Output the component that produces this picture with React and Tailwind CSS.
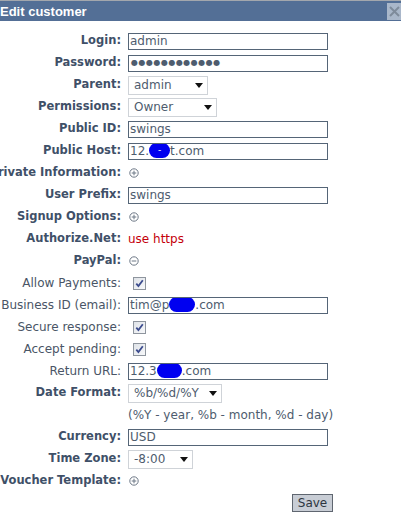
import React from "react";

const font = { fontFamily: '"DejaVu Sans", Verdana, sans-serif' };

const Blob = ({ w = 24, dash = false }) => (
  <span
    className={`inline-flex items-center justify-center bg-[#0000f0] rounded-full h-[15px] align-middle -mt-[2px] text-white text-[9px] leading-none`}
    style={{ width: w }}
  >
    {dash ? "-" : ""}
  </span>
);

const PlusCircle = ({ minus = false }) => (
  <svg width="10" height="10" viewBox="0 0 10 10" className="ml-[1px]">
    <circle cx="5" cy="5" r="4.2" fill="none" stroke="#6d7886" strokeWidth="1" />
    <line x1="2.7" y1="5" x2="7.3" y2="5" stroke="#6d7886" strokeWidth="1" />
    {!minus && <line x1="5" y1="2.7" x2="5" y2="7.3" stroke="#6d7886" strokeWidth="1" />}
  </svg>
);

const Checkbox = () => (
  <span className="ml-[5px] inline-flex w-[13px] h-[13px] border border-[#8e959e] bg-gradient-to-br from-[#dfe3e8] to-[#f7f8fa] items-center justify-center">
    <svg width="9" height="9" viewBox="0 0 9 9">
      <path d="M1.3 4.6 L3.4 7 L7.8 1.2" fill="none" stroke="#3c4c8e" strokeWidth="1.8" />
    </svg>
  </span>
);

const TextBox = ({ children }) => (
  <div className="w-[200px] h-[17px] border border-[#556577] bg-white px-[1px] flex items-center text-[12px] text-[#4e5c6e] whitespace-nowrap overflow-hidden leading-none">
    {children}
  </div>
);

const Select = ({ value, width }) => (
  <div
    className="h-[19px] border border-[#cfd3d8] bg-white flex items-center justify-between pl-[5px] pr-[4px] text-[12px] text-[#4e5c6e] leading-none"
    style={{ width }}
  >
    <span>{value}</span>
    <svg width="8" height="5" viewBox="0 0 8 5">
      <path d="M0 0 H8 L4 5 Z" fill="#111" />
    </svg>
  </div>
);

const Row = ({ label, bold = true, children }) => (
  <div className="flex items-center h-[22px]">
    <div className="w-[121px] shrink-0 flex justify-end whitespace-nowrap">
      <span
        className={
          bold
            ? "font-bold text-[11.5px] text-[#3f5068]"
            : "text-[12px] text-[#4a5566]"
        }
      >
        {label}
      </span>
    </div>
    <div className="ml-[7px] flex items-center">{children}</div>
  </div>
);

export default function App() {
  return (
    <div className="w-[401px] h-[522px] bg-white overflow-hidden" style={font}>
      {/* Title bar */}
      <div className="border-t border-[#a3a7ad] bg-[#536f96] h-[21px] flex items-center justify-between">
        <span
          className="text-white font-bold text-[13px] leading-none"
          style={{ fontFamily: '"Liberation Sans", Arial, sans-serif' }}
        >
          Edit customer
        </span>
        <span className="w-[14px] h-[17px] bg-[#a9b7ca] flex items-center justify-center">
          <svg width="11" height="11" viewBox="0 0 11 11">
            <path d="M1 1 L10 10 M10 1 L1 10" stroke="#7e8b9b" strokeWidth="2" />
          </svg>
        </span>
      </div>

      <div className="pt-[9px]">
        <Row label="Login:">
          <TextBox>admin</TextBox>
        </Row>
        <Row label="Password:">
          <TextBox>
            <span className="text-[8px] tracking-[0.5px] text-[#4e5c6e] pl-[1px]">
              ●●●●●●●●●●●●
            </span>
          </TextBox>
        </Row>
        <Row label="Parent:">
          <Select value="admin" width={80} />
        </Row>
        <Row label="Permissions:">
          <Select value="Owner" width={89} />
        </Row>
        <Row label="Public ID:">
          <TextBox>swings</TextBox>
        </Row>
        <Row label="Public Host:">
          <TextBox>
            12.
            <Blob w={21} dash />
            t.com
          </TextBox>
        </Row>
        <Row label="Private Information:">
          <PlusCircle />
        </Row>
        <Row label="User Prefix:">
          <TextBox>swings</TextBox>
        </Row>
        <Row label="Signup Options:">
          <PlusCircle />
        </Row>
        <Row label="Authorize.Net:">
          <span className="text-[12px] text-[#c4000a]">use https</span>
        </Row>
        <Row label="PayPal:">
          <PlusCircle minus />
        </Row>
        <Row label="Allow Payments:" bold={false}>
          <Checkbox />
        </Row>
        <Row label="Business ID (email):" bold={false}>
          <TextBox>
            tim@p
            <Blob w={26} />
            .com
          </TextBox>
        </Row>
        <Row label="Secure response:" bold={false}>
          <Checkbox />
        </Row>
        <Row label="Accept pending:" bold={false}>
          <Checkbox />
        </Row>
        <Row label="Return URL:" bold={false}>
          <TextBox>
            12.3
            <Blob w={25} />
            .com
          </TextBox>
        </Row>
        <Row label="Date Format:">
          <Select value="%b/%d/%Y" width={94} />
        </Row>
        <Row label="">
          <span className="text-[12px] text-[#4e5c6e]">
            (%Y - year, %b - month, %d - day)
          </span>
        </Row>
        <Row label="Currency:">
          <TextBox>USD</TextBox>
        </Row>
        <Row label="Time Zone:">
          <Select value="-8:00" width={65} />
        </Row>
        <Row label="Voucher Template:">
          <PlusCircle />
        </Row>
        <div className="flex items-center h-[22px] pl-[292px]">
          <button className="w-[41px] h-[18px] border border-[#5f6670] bg-[#c8cdd5] text-[12px] text-[#2d3540] leading-none">
            Save
          </button>
        </div>
      </div>
    </div>
  );
}
